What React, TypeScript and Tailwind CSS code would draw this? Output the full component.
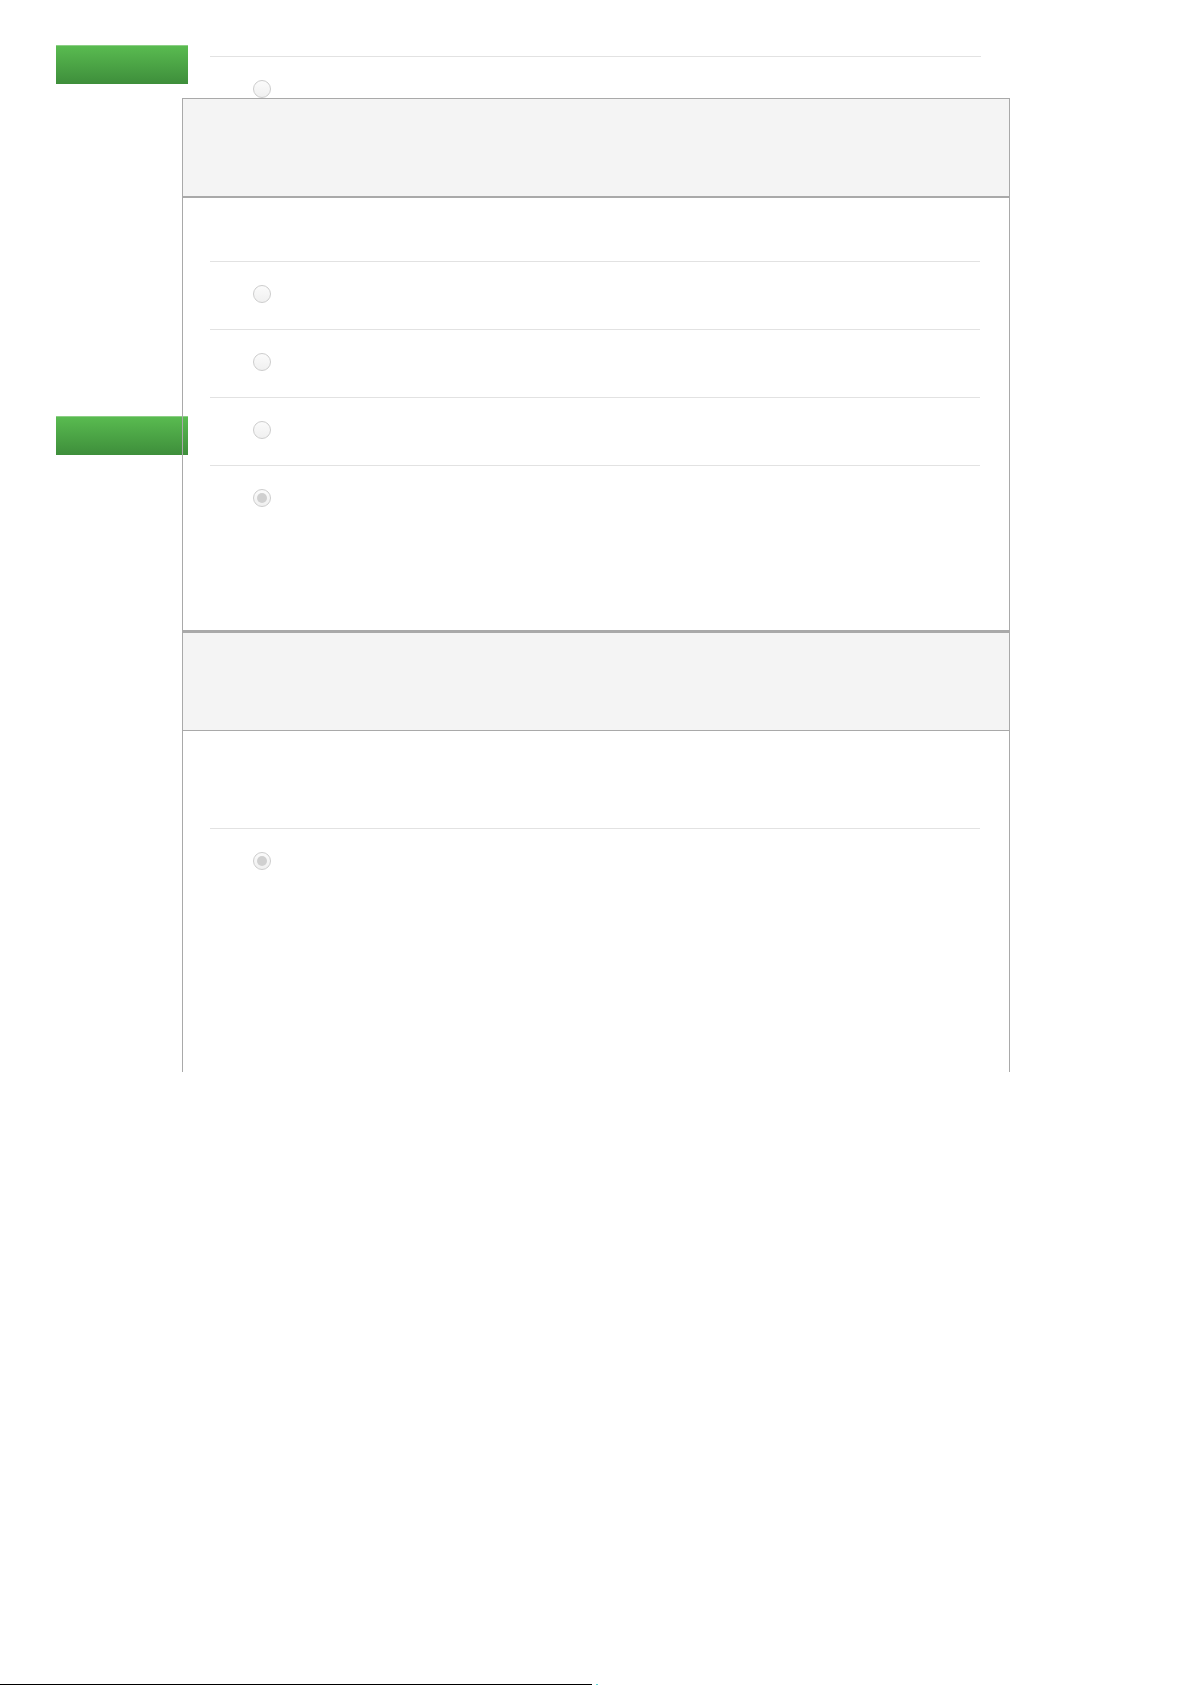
import React from "react"

function Radio({ checked = false }: { checked?: boolean }) {
  return (
    <div className="w-[18px] h-[18px] rounded-full border-[1.5px] border-[#cdcdcd] bg-gradient-to-b from-[#fbfbfb] to-[#f0f0f0] flex items-center justify-center">
      {checked && <div className="w-[10px] h-[10px] rounded-full bg-[#d0d0d0]" />}
    </div>
  )
}

function Row({ checked = false, short = false }: { checked?: boolean; short?: boolean }) {
  return (
    <div className={`border-t border-[#e2e2e2] pl-[43px] pt-[23px] ${short ? "h-[42px]" : "h-[68px]"}`}>
      <Radio checked={checked} />
    </div>
  )
}

function GreenBar() {
  return (
    <div className="w-[132px] h-[39px] border-t border-[#8ccf85] bg-gradient-to-b from-[#59bb50] to-[#3e8e3b]" />
  )
}

export default function App() {
  return (
    <div className="h-[1685px] flex flex-col bg-white font-['Liberation_Sans',sans-serif]">
      <div className="flex items-start">
        <div className="pl-[56px] flex flex-col">
          <div className="mt-[45px]">
            <GreenBar />
          </div>
          <div className="mt-[332px]">
            <GreenBar />
          </div>
        </div>

        <div className="ml-[-6px] w-[828px] relative z-10 flex flex-col">
          <div className="mt-[56px] pl-[28px] pr-[29px]">
            <Row short />
          </div>

          <div className="border border-[#a9a9a9]">
            <div className="h-[97px] bg-[#f4f4f4] border-b-2 border-[#a9a9a9] box-content" />
            <div className="pt-[63px] pb-[97px] pl-[27px] pr-[29px]">
              <Row />
              <Row />
              <Row />
              <Row checked />
            </div>
          </div>

          <div className="border-x border-t-2 border-[#a9a9a9] h-[441px]">
            <div className="h-[97px] bg-[#f4f4f4] border-b border-[#a9a9a9] box-content" />
            <div className="pt-[97px] pl-[27px] pr-[29px]">
              <Row checked />
            </div>
          </div>
        </div>
      </div>

      <div className="mt-auto flex items-end">
        <div className="w-[592px] h-px bg-black" />
        <div className="ml-[4px] w-[2px] h-px bg-[#5fd6d6]" />
      </div>
    </div>
  )
}
